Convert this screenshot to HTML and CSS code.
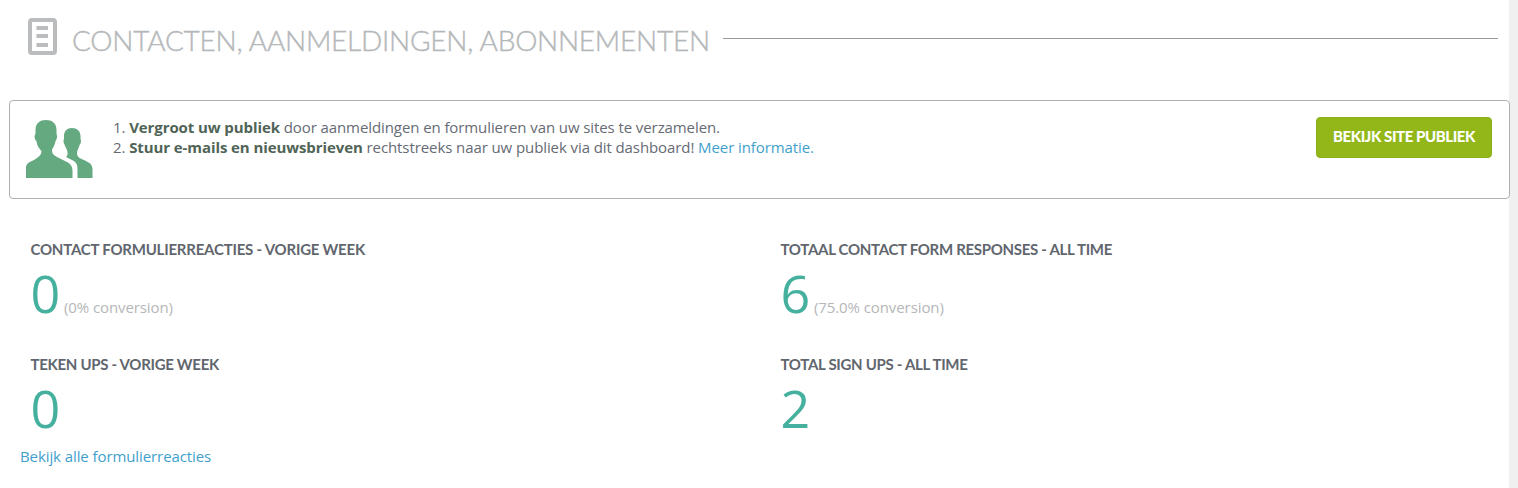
FILE: index.html
```html
<!DOCTYPE html>
<html lang="nl">
<head>
    <meta charset="UTF-8">
    <meta name="viewport" content="width=device-width, initial-scale=1.0">
    <title>Contacten, aanmeldingen, abonnementen</title>
    <link rel="stylesheet" href="styles.css">
</head>
<body>
    <div class="page">
        <div class="section-header">
            <svg class="form-icon" width="30" height="38" viewBox="0 0 30 38">
                <rect x="2" y="2" width="25" height="33" rx="2" fill="none" stroke="#babcbe" stroke-width="4"/>
                <path d="M8.500 10h11.500M8.500 18h11.500M8.500 27h11.500" stroke="#babcbe" stroke-width="3.800"/>
            </svg>
            <h2>Contacten, aanmeldingen, abonnementen</h2>
            <div class="line"></div>
        </div>

        <div class="notice">
            <svg class="people-icon" width="67" height="59" viewBox="0 0 67 59">
                <path d="M20 0C26 0 30.500 3 30.500 10V14C31.500 15 31 20 29.500 21C29 25 27 27 26 30C26 34 28 35 31 37L41 42C45 44 46.500 47 46.500 51V58H0V48C0 44 3 42 6 41C11 38 15.500 36 15.500 31C13 28 11 26 10.500 21C8.500 20 8 15 9.500 14V10C9.500 3 14 0 20 0Z" fill="#65a981"/>
                <path d="M46 8C51 8 54.500 11 54.500 16V19C55.500 20 55 24 53.500 25C53 28 51 30 51 33C51 38 55 38.500 59 40.500C64 43 66 44 66.500 49V58H51.500V49C51.500 44 50 42 46 40L40 37C42.500 35 42 31 39.500 27L38.700 25C37.500 23 37 20 38 19V16C38 11 41 8 46 8Z" fill="#65a981"/>
            </svg>
            <div class="notice-text">
                <p>1. <b>Vergroot uw publiek</b> door aanmeldingen en formulieren van uw sites te verzamelen.</p>
                <p>2. <b>Stuur e-mails en nieuwsbrieven</b> rechtstreeks naar uw publiek via dit dashboard! <a href="#">Meer informatie.</a></p>
            </div>
            <button class="btn">Bekijk site publiek</button>
        </div>

        <div class="stats">
            <div class="stat">
                <h3>Contact formulierreacties - vorige week</h3>
                <div class="value"><span class="number">0</span> (0% conversion)</div>
            </div>
            <div class="stat">
                <h3 class="tight">Totaal contact form responses - all time</h3>
                <div class="value"><span class="number">6</span> (75.0% conversion)</div>
            </div>
            <div class="stat">
                <h3 class="tight">Teken ups - vorige week</h3>
                <div class="value"><span class="number">0</span></div>
            </div>
            <div class="stat">
                <h3 class="tight">Total sign ups - all time</h3>
                <div class="value"><span class="number">2</span></div>
            </div>
        </div>
        <a class="all-link" href="#">Bekijk alle formulierreacties</a>
    </div>
</body>
</html>
```
FILE: styles.css
```css
* {
    box-sizing: border-box;
}

body {
    margin: 0;
    background-color: #f0f0f0;
    font-family: "Open Sans", sans-serif;
    font-size: 15px;
    line-height: 20px;
    letter-spacing: -0.09px;
    color: #666b74;
}

a {
    color: #419fcb;
    text-decoration: none;
}

.page {
    width: 1509px;
    height: 488px;
    background-color: #fff;
}

.section-header {
    display: flex;
    height: 100px;
    padding: 18px 11px 0 28px;
}

.section-header h2 {
    margin: 4px 0 0 14px;
    width: 651px;
    font-family: Lato, sans-serif;
    font-size: 28px;
    font-weight: 300;
    line-height: 36px;
    letter-spacing: -0.24px;
    color: #b5b8ba;
    -webkit-text-stroke: 0.4px #b5b8ba;
    text-transform: uppercase;
    white-space: nowrap;
}

.section-header .line {
    flex: 1;
    height: 1px;
    margin-top: 20px;
    background-color: #98999b;
}

.notice {
    display: flex;
    align-items: flex-start;
    height: 99px;
    margin-left: 9px;
    margin-right: -1px;
    padding: 16px 17px 0 16px;
    border: 1px solid #b0b0b3;
    border-radius: 4px;
}

.people-icon {
    margin-top: 3px;
}

.notice-text {
    flex: 1;
    margin-left: 20px;
}

.notice-text p {
    margin: 0;
}

.notice-text b {
    color: #4f6456;
}

.btn {
    width: 176px;
    height: 41px;
    padding: 0 0 3px;
    border: 1px solid #8cb01a;
    border-radius: 4px;
    background-color: #93b719;
    color: white;
    font-family: Lato, sans-serif;
    font-size: 15px;
    font-weight: 900;
    letter-spacing: -0.42px;
    text-transform: uppercase;
    white-space: nowrap;
    cursor: pointer;
}

.stats {
    display: grid;
    grid-template-columns: 750px 1fr;
    grid-template-rows: 115px 115px;
    padding: 40px 0 0 30.5px;
}

.stat h3 {
    margin: 0;
    font-family: Lato, sans-serif;
    font-size: 15px;
    font-weight: 700;
    line-height: 20px;
    letter-spacing: -0.22px;
    color: #61666e;
    text-transform: uppercase;
}

.stat h3.tight {
    letter-spacing: -0.3px;
}

.value {
    margin-top: 8px;
    line-height: 52px;
    color: #b5b7b9;
}

.number {
    font-size: 52px;
    color: #45b09e;
}

.all-link {
    display: block;
    margin: -23px 0 0 20px;
    white-space: nowrap;
}
```
